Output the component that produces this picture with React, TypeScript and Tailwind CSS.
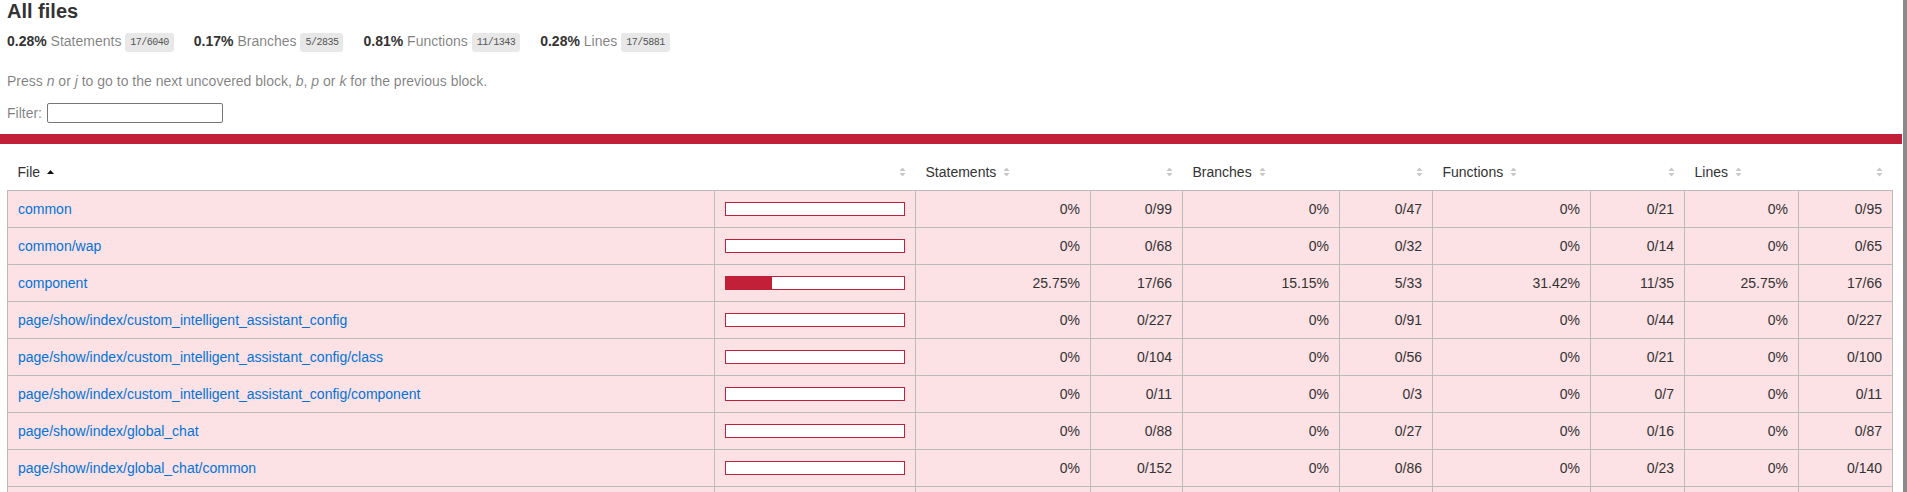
import React from "react";

const summary = [
  { pct: "0.28%", label: "Statements", frac: "17/6040" },
  { pct: "0.17%", label: "Branches", frac: "5/2835" },
  { pct: "0.81%", label: "Functions", frac: "11/1343" },
  { pct: "0.28%", label: "Lines", frac: "17/5881" },
];

// each row: file, bar fill %, then pct/abs pairs for statements, branches, functions, lines
const rows: { file: string; fill: number; cells: string[] }[] = [
  { file: "common", fill: 0, cells: ["0%", "0/99", "0%", "0/47", "0%", "0/21", "0%", "0/95"] },
  { file: "common/wap", fill: 0, cells: ["0%", "0/68", "0%", "0/32", "0%", "0/14", "0%", "0/65"] },
  { file: "component", fill: 25.75, cells: ["25.75%", "17/66", "15.15%", "5/33", "31.42%", "11/35", "25.75%", "17/66"] },
  { file: "page/show/index/custom_intelligent_assistant_config", fill: 0, cells: ["0%", "0/227", "0%", "0/91", "0%", "0/44", "0%", "0/227"] },
  { file: "page/show/index/custom_intelligent_assistant_config/class", fill: 0, cells: ["0%", "0/104", "0%", "0/56", "0%", "0/21", "0%", "0/100"] },
  { file: "page/show/index/custom_intelligent_assistant_config/component", fill: 0, cells: ["0%", "0/11", "0%", "0/3", "0%", "0/7", "0%", "0/11"] },
  { file: "page/show/index/global_chat", fill: 0, cells: ["0%", "0/88", "0%", "0/27", "0%", "0/16", "0%", "0/87"] },
  { file: "page/show/index/global_chat/common", fill: 0, cells: ["0%", "0/152", "0%", "0/86", "0%", "0/23", "0%", "0/140"] },
];

const colWidths = ["w-[707px]", "w-[201px]", "w-[175px]", "w-[92px]", "w-[157px]", "w-[93px]", "w-[158px]", "w-[94px]", "w-[114px]", "w-[94px]"];

const Sorter = ({ sorted }: { sorted?: boolean }) => (
  <svg width="7" height="10" viewBox="0 0 7 10" className="inline-block align-baseline ml-[0.5em]">
    {sorted ? (
      <polygon points="0,7 3.5,3 7,7" fill="#111" />
    ) : (
      <>
        <polygon points="0.5,4 3.5,0.5 6.5,4" fill="#c8c8c8" />
        <polygon points="0.5,6 3.5,9.5 6.5,6" fill="#c8c8c8" />
      </>
    )}
  </svg>
);

const td = "p-[10px] border-r border-[#bbb] bg-[#FCE1E5] text-right";

export default function App() {
  return (
    <div className="flex h-[492px] overflow-hidden bg-white text-[14px] leading-[normal] text-[#333] font-['Liberation_Sans',Arial,Helvetica,sans-serif]">
      <div className="w-[1903px] shrink-0">
        <div className="pl-[7px] pb-[11px]">
          <h1 className="text-[20px] font-bold">All files</h1>
          <div className="flex py-[10px]">
            {summary.map((s) => (
              <div key={s.label} className="pr-[20px]">
                <span className="font-bold">{s.pct} </span>
                <span className="text-black/50">{s.label}</span>{" "}
                <span className="align-middle rounded-[3px] bg-[#E8E8E8] px-[5px] py-[4px] text-[10px] tracking-[-0.5px] text-[#555] font-['Liberation_Mono',Consolas,monospace]">
                  {s.frac}
                </span>
              </div>
            ))}
          </div>
          <p className="my-[14px] text-black/50">
            Press <em>n</em> or <em>j</em> to go to the next uncovered block, <em>b</em>, <em>p</em> or <em>k</em> for the previous block.
          </p>
          <div className="flex items-center gap-[5px] text-black/50">
            Filter:
            <input type="search" className="h-[20px] w-[176px] rounded-[2px] border border-[#767676] bg-white px-[2px] text-[13px] text-[#333]" />
          </div>
        </div>

        <div className="h-[10px] w-[1902px] bg-[#C21F39]" />

        <div className="pt-[10px] pl-[7px]">
          <table className="w-[1885px] table-fixed border-collapse">
            <colgroup>
              {colWidths.map((w, i) => (
                <col key={i} className={w} />
              ))}
            </colgroup>
            <thead>
              <tr className="border-b border-[#bbb]">
                <th className="p-[10px] text-left font-normal whitespace-nowrap">
                  File
                  <Sorter sorted />
                </th>
                <th className="p-[10px] text-right font-normal"><Sorter /></th>
                <th className="p-[10px] text-left font-normal whitespace-nowrap">Statements<Sorter /></th>
                <th className="p-[10px] text-right font-normal"><Sorter /></th>
                <th className="p-[10px] text-left font-normal whitespace-nowrap">Branches<Sorter /></th>
                <th className="p-[10px] text-right font-normal"><Sorter /></th>
                <th className="p-[10px] text-left font-normal whitespace-nowrap">Functions<Sorter /></th>
                <th className="p-[10px] text-right font-normal"><Sorter /></th>
                <th className="p-[10px] text-left font-normal whitespace-nowrap">Lines<Sorter /></th>
                <th className="p-[10px] text-right font-normal"><Sorter /></th>
              </tr>
            </thead>
            <tbody className="border border-[#bbb]">
              {rows.map((r) => (
                <tr key={r.file} className="border-b border-[#bbb]">
                  <td className="p-[10px] border-r border-[#bbb] bg-[#FCE1E5] whitespace-nowrap">
                    <a href="#" className="text-[#0074D9]">{r.file}</a>
                  </td>
                  <td className="p-[10px] border-r border-[#bbb] bg-[#FCE1E5]">
                    <div className="flex h-[14px] border border-[#C21F39] bg-white">
                      <div className="h-[12px] bg-[#C21F39]" style={{ width: `${r.fill}%` }} />
                    </div>
                  </td>
                  {r.cells.map((c, i) => (
                    <td key={i} className={i === 7 ? "p-[10px] bg-[#FCE1E5] text-right" : td}>
                      {c}
                    </td>
                  ))}
                </tr>
              ))}
              <tr className="border-b border-[#bbb]">
                {colWidths.map((_, i) => (
                  <td key={i} className={i === 9 ? "p-[10px] bg-[#FCE1E5]" : "p-[10px] border-r border-[#bbb] bg-[#FCE1E5]"}>
                    &nbsp;
                  </td>
                ))}
              </tr>
            </tbody>
          </table>
        </div>
      </div>
      <div className="w-[4px] bg-[#8a8a8a]" />
    </div>
  );
}
